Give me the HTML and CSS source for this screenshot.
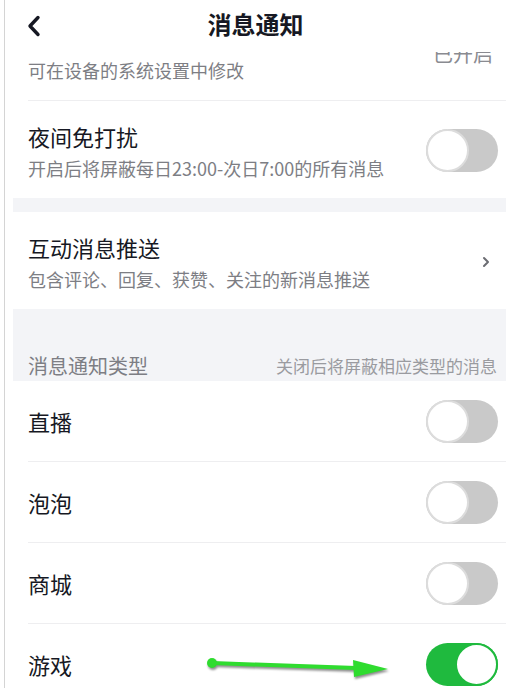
FILE: index.html
```html
<!DOCTYPE html>
<html lang="zh-CN">
<head>
  <meta charset="UTF-8">
  <title>消息通知</title>
  <link rel="stylesheet" href="styles.css">
</head>
<body>

  <div class="page">
    <header class="topbar">
      <span class="back">
        <svg width="16" height="22" viewBox="0 0 16 22"><polyline points="12,2.5 4,11 12,19.5" fill="none" stroke="#161823" stroke-width="3.4" stroke-linecap="round" stroke-linejoin="round"/></svg>
      </span>
      <h1>消息通知</h1>
    </header>

    <div class="list">
      <div class="row partial">
        <div class="sub">可在设备的系统设置中修改</div>
        <span class="state">已开启</span>
      </div>

      <div class="row tall last">
        <div class="text">
          <div class="title">夜间免打扰</div>
          <div class="sub">开启后将屏蔽每日23:00-次日7:00的所有消息</div>
        </div>
        <div class="switch"><span class="knob"></span></div>
      </div>

      <div class="band"></div>

      <div class="row tall last">
        <div class="text">
          <div class="title">互动消息推送</div>
          <div class="sub">包含评论、回复、获赞、关注的新消息推送</div>
        </div>
        <span class="chevron">
          <svg width="8" height="12" viewBox="0 0 8 12"><polyline points="2,2 6,6 2,10" fill="none" stroke="#6b6c72" stroke-width="2" stroke-linecap="round" stroke-linejoin="round"/></svg>
        </span>
      </div>

      <div class="section-head">
        <span class="label">消息通知类型</span>
        <span class="hint">关闭后将屏蔽相应类型的消息</span>
      </div>

      <div class="row">
        <div class="title">直播</div>
        <div class="switch"><span class="knob"></span></div>
      </div>
      <div class="row">
        <div class="title">泡泡</div>
        <div class="switch"><span class="knob"></span></div>
      </div>
      <div class="row">
        <div class="title">商城</div>
        <div class="switch"><span class="knob"></span></div>
      </div>
      <div class="row">
        <div class="title">游戏</div>
        <div class="switch on"><span class="knob"></span></div>
      </div>
    </div>

    <!-- annotation arrow drawn over the screenshot -->
    <svg class="arrow" width="200" height="36" viewBox="0 0 200 36">
      <line x1="12" y1="14" x2="156" y2="19" stroke="#2fdc2f" stroke-width="4" stroke-linecap="round"/>
      <circle cx="12" cy="14" r="5" fill="#2fdc2f"/>
      <polygon points="153,11 188,20 154,28" fill="#2fdc2f"/>
    </svg>
  </div>

</body>
</html>
```

FILE: styles.css
```css
html, body {
  margin: 0;
  padding: 0;
  background-color: #ffffff;
  overflow: hidden;
}
body {
  font-family: "Noto Sans CJK SC", "Noto Sans", sans-serif;
  color: #161823;
  width: 506px;
  height: 688px;
}
.page {
  position: relative;
  margin-left: 4px;
  border-left: 1px solid #d4d4d4;
  height: 688px;
}
.topbar {
  height: 52px;
  display: flex;
  align-items: center;
  justify-content: center;
  position: relative;
}
.topbar h1 {
  margin: 0;
  font-size: 24px;
  font-weight: 700;
  line-height: 30px;
  margin-top: -4px;
}
.back {
  position: absolute;
  left: 21px;
  top: 15px;
  display: flex;
}
.list {
  margin-left: 8px;
}
.row {
  margin-left: 15px;
  padding-right: 8px;
  height: 80px;
  border-bottom: 1px solid #eeeef0;
  display: flex;
  align-items: center;
  justify-content: space-between;
}
.row.last {
  border-bottom: none;
}
.row.partial {
  height: 48px;
  align-items: flex-start;
  overflow: hidden;
  padding-right: 13px;
}
.row.partial .sub {
  margin-top: 6px;
}
.state {
  font-size: 20px;
  line-height: 24px;
  color: #8a8b91;
  margin-top: -10px;
}
.row.tall {
  height: auto;
  padding-top: 20px;
  padding-bottom: 18px;
}
.text {
  display: flex;
  flex-direction: column;
  gap: 5px;
}
.title {
  font-size: 22px;
  line-height: 30px;
}
.sub {
  font-size: 18px;
  line-height: 24px;
  color: #7d7e84;
}
.band {
  height: 14px;
  background-color: #f3f4f7;
}
.section-head {
  height: 72px;
  background-color: #f3f4f7;
  display: flex;
  align-items: flex-end;
  justify-content: space-between;
  padding: 0 9px 2px 15px;
  box-sizing: border-box;
}
.section-head .label {
  font-size: 20px;
  line-height: 26px;
  color: #7d7e84;
}
.section-head .hint {
  font-size: 17px;
  line-height: 26px;
  color: #9a9ba0;
}
.chevron {
  display: flex;
  margin-right: 8px;
  margin-top: 0;
}
.switch {
  width: 72px;
  height: 43px;
  border-radius: 22px;
  background-color: #c9c9c9;
  display: flex;
  align-items: center;
  justify-content: flex-start;
  flex-shrink: 0;
}
.switch .knob {
  width: 39px;
  height: 39px;
  border-radius: 50%;
  background-color: #ffffff;
  border: 2px solid #dcdcdc;
}
.switch.on {
  background-color: #1fba3e;
  justify-content: flex-end;
}
.switch.on .knob {
  border-color: #1fba3e;
}
.arrow {
  position: absolute;
  left: 195px;
  top: 649px;
  filter: drop-shadow(1px 2px 1px rgba(0, 0, 0, 0.45));
}
```
